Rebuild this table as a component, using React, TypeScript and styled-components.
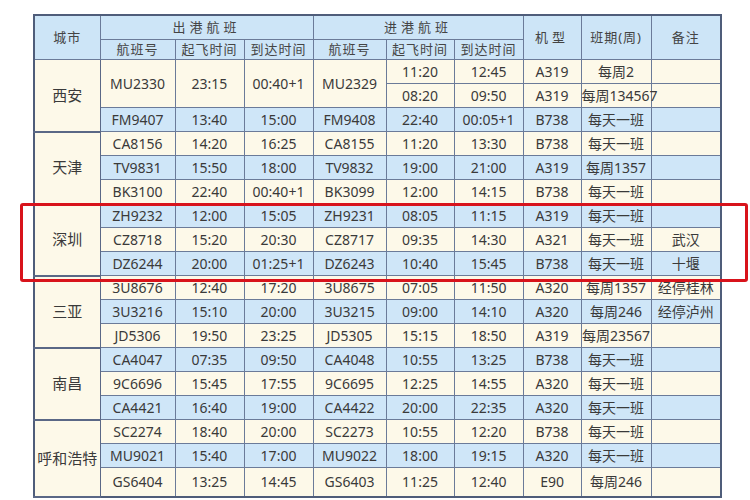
import * as React from "react"
import styled, { createGlobalStyle } from "styled-components"

const Global = createGlobalStyle`
  html, body {
    margin: 0;
    padding: 0;
    background: #ffffff;
  }
  body {
    font-family: "Noto Sans", "Noto Sans CJK SC", sans-serif;
    color: #3a3a3a;
  }
`;

const Page = styled.main`
  padding: 14px 0 0 33px;
  width: 750px;
  box-sizing: border-box;
`;

const TableWrap = styled.div`
  position: relative;
  width: 687px;
`;

const Schedule = styled.table`
  width: 687px;
  border-collapse: collapse;
  table-layout: fixed;
  border: 2px solid #4f5d7a;
  font-size: 14px;
  line-height: 1;
`;

const HeadCell = styled.th<{ $h?: number; $spaced?: boolean }>`
  height: ${(p) => p.$h ?? 19}px;
  padding: 0;
  background: #cde5f7;
  border: 1px solid #6b7b99;
  font-weight: normal;
  font-size: 13px;
  color: #444;
  letter-spacing: ${(p) => (p.$spaced ? "4px" : "1px")};
  text-align: center;
  white-space: nowrap;
`;

const Cell = styled.td<{ $blue?: boolean; $h?: number }>`
  height: ${(p) => p.$h ?? 23}px;
  padding: 0;
  background: ${(p) => (p.$blue ? "#cfe6f8" : "#fdf9e9")};
  border: 1px solid #6b7b99;
  text-align: center;
  white-space: nowrap;
  overflow: visible;
`;

const CityCell = styled.td`
  padding: 0;
  background: #fdf9e9;
  border: 1px solid #5a6886;
  border-bottom-width: 2px;
  text-align: center;
  font-size: 15px;
  white-space: nowrap;
`;

const Highlight = styled.div`
  position: absolute;
  left: -13px;
  top: 189px;
  width: 722px;
  height: 73px;
  border: 3px solid #d8131b;
  border-radius: 3px;
  pointer-events: none;
`;

type Row = {
  out?: [string, string, string, string];
  inn: [string, string];
  type: string;
  period: string;
  note?: string;
  span?: number;
  blue: boolean;
  h?: number;
};

type Group = { city: string; rows: Row[] };

const groups: Group[] = [
  {
    city: "西安",
    rows: [
      { out: ["MU2330", "23:15", "00:40+1", "MU2329"], span: 2, inn: ["11:20", "12:45"], type: "A319", period: "每周2", blue: false },
      { inn: ["08:20", "09:50"], type: "A319", period: "每周134567", blue: false },
      { out: ["FM9407", "13:40", "15:00", "FM9408"], inn: ["22:40", "00:05+1"], type: "B738", period: "每天一班", blue: true },
    ],
  },
  {
    city: "天津",
    rows: [
      { out: ["CA8156", "14:20", "16:25", "CA8155"], inn: ["11:20", "13:30"], type: "B738", period: "每天一班", blue: false },
      { out: ["TV9831", "15:50", "18:00", "TV9832"], inn: ["19:00", "21:00"], type: "A319", period: "每周1357", blue: true },
      { out: ["BK3100", "22:40", "00:40+1", "BK3099"], inn: ["12:00", "14:15"], type: "B738", period: "每天一班", blue: false },
    ],
  },
  {
    city: "深圳",
    rows: [
      { out: ["ZH9232", "12:00", "15:05", "ZH9231"], inn: ["08:05", "11:15"], type: "A319", period: "每天一班", blue: true },
      { out: ["CZ8718", "15:20", "20:30", "CZ8717"], inn: ["09:35", "14:30"], type: "A321", period: "每天一班", note: "武汉", blue: false },
      { out: ["DZ6244", "20:00", "01:25+1", "DZ6243"], inn: ["10:40", "15:45"], type: "B738", period: "每天一班", note: "十堰", blue: true },
    ],
  },
  {
    city: "三亚",
    rows: [
      { out: ["3U8676", "12:40", "17:20", "3U8675"], inn: ["07:05", "11:50"], type: "A320", period: "每周1357", note: "经停桂林", blue: false },
      { out: ["3U3216", "15:10", "20:00", "3U3215"], inn: ["09:00", "14:10"], type: "A320", period: "每周246", note: "经停泸州", blue: true },
      { out: ["JD5306", "19:50", "23:25", "JD5305"], inn: ["15:15", "18:50"], type: "A319", period: "每周23567", blue: false },
    ],
  },
  {
    city: "南昌",
    rows: [
      { out: ["CA4047", "07:35", "09:50", "CA4048"], inn: ["10:55", "13:25"], type: "B738", period: "每天一班", blue: true },
      { out: ["9C6696", "15:45", "17:55", "9C6695"], inn: ["12:25", "14:55"], type: "A320", period: "每天一班", blue: false },
      { out: ["CA4421", "16:40", "19:00", "CA4422"], inn: ["20:00", "22:35"], type: "A320", period: "每天一班", blue: true },
    ],
  },
  {
    city: "呼和浩特",
    rows: [
      { out: ["SC2274", "18:40", "20:00", "SC2273"], inn: ["10:55", "12:20"], type: "B738", period: "每天一班", blue: false },
      { out: ["MU9021", "15:40", "17:00", "MU9022"], inn: ["18:00", "19:15"], type: "A320", period: "每天一班", blue: true },
      { out: ["GS6404", "13:25", "14:45", "GS6403"], inn: ["11:25", "12:40"], type: "E90", period: "每周246", blue: false, h: 28 },
    ],
  },
];

const colWidths = [66, 75, 69, 69, 73, 68, 69, 58, 70, 70];

export default function App() {
  return (
    <>
      <Global />
      <Page>
        <TableWrap>
          <Schedule>
            <colgroup>
              {colWidths.map((w, i) => (
                <col key={i} style={{ width: w }} />
              ))}
            </colgroup>
            <thead>
              <tr>
                <HeadCell rowSpan={2}>城市</HeadCell>
                <HeadCell colSpan={3} $h={23} $spaced>出港航班</HeadCell>
                <HeadCell colSpan={3} $h={23} $spaced>进港航班</HeadCell>
                <HeadCell rowSpan={2} $spaced>机型</HeadCell>
                <HeadCell rowSpan={2}>班期(周)</HeadCell>
                <HeadCell rowSpan={2}>备注</HeadCell>
              </tr>
              <tr>
                <HeadCell>航班号</HeadCell>
                <HeadCell>起飞时间</HeadCell>
                <HeadCell>到达时间</HeadCell>
                <HeadCell>航班号</HeadCell>
                <HeadCell>起飞时间</HeadCell>
                <HeadCell>到达时间</HeadCell>
              </tr>
            </thead>
            <tbody>
              {groups.map((g) =>
                g.rows.map((r, i) => (
                  <tr key={g.city + i}>
                    {i === 0 && <CityCell rowSpan={g.rows.length}>{g.city}</CityCell>}
                    {r.out &&
                      r.out.map((v, j) => (
                        <Cell key={j} rowSpan={r.span} $blue={r.blue} $h={r.h}>
                          {v}
                        </Cell>
                      ))}
                    <Cell $blue={r.blue} $h={r.h}>{r.inn[0]}</Cell>
                    <Cell $blue={r.blue} $h={r.h}>{r.inn[1]}</Cell>
                    <Cell $blue={r.blue} $h={r.h}>{r.type}</Cell>
                    <Cell $blue={r.blue} $h={r.h}>{r.period}</Cell>
                    <Cell $blue={r.blue} $h={r.h}>{r.note ?? ""}</Cell>
                  </tr>
                ))
              )}
            </tbody>
          </Schedule>
          <Highlight />
        </TableWrap>
      </Page>
    </>
  )
}
